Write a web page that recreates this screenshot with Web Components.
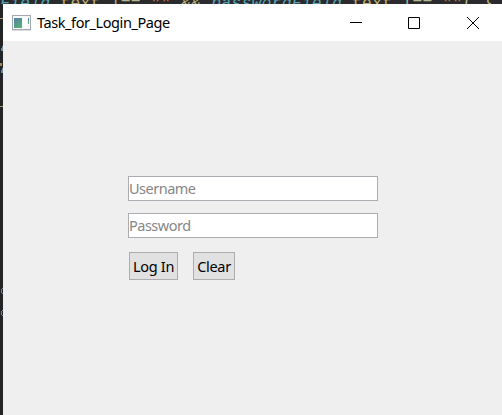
<!DOCTYPE html>
<html lang="en"><head><meta charset="utf-8"><title>Task_for_Login_Page</title>
<style>html,body{margin:0;height:100%;overflow:hidden;background:#232425}</style></head><body>
<desk-view></desk-view>
<script>
const define=(name,html)=>customElements.define(name,class extends HTMLElement{
  constructor(){super();this.attachShadow({mode:'open'}).innerHTML=html;}
});
define('code-strip',`<style>:host{display:block;height:4px;overflow:hidden;background:#2b2b2d;font:16.4px/20px "Liberation Mono",monospace;letter-spacing:.22px;color:#b5b78f}
div{white-space:pre;margin:-6px 0 0 0}.f{color:#58a3b5;font-style:italic}.y{color:#bfb178}.s{color:#c87d3e}</style><div><span class="f">Field</span>.<span class="y">text</span> !== <span class="s">""</span> <span class="y">&amp;&amp;</span> <span class="f">passwordField</span>.<span class="y">text</span> !== <span class="s">""</span>( }</div>`);
define('title-bar',`<style>:host{display:flex;align-items:center;height:37px;background:#fff;color:#000;font:14.5px/20px "Noto Sans",sans-serif}
.app{margin-left:9px;width:19px;height:16px;flex:none}.t{margin-left:6px;flex:1;white-space:nowrap;letter-spacing:-.42px;padding-bottom:2px}
.c{display:grid;grid-template-columns:58px 58px 60px;margin-right:-1px}.c svg{width:12px;height:12px;justify-self:center}</style>
<svg class="app" viewBox="0 0 19 16"><rect x=".5" y=".5" width="18" height="14" fill="#f7f8fa" stroke="#a5a8ae"/><path d="M0 15.5h19" stroke="#ddd"/><defs><linearGradient id="g" x2=".6" y2="1"><stop stop-color="#5580a8"/><stop offset="1" stop-color="#57ad79"/></linearGradient></defs><rect x="2" y="3" width="8" height="10" fill="url(#g)"/><rect x="11" y="3" width="4" height="10" fill="#fff"/><rect x="16" y="3" width="1" height="3" fill="#4a83b5"/><rect x="16" y="6" width="1" height="3" fill="#65b184"/></svg>
<span class="t"><slot></slot></span>
<div class="c"><svg viewBox="0 0 12 12"><path d="M0 5.5h12" stroke="#000"/></svg><svg viewBox="0 0 12 12"><path d="M.5.5h11v11H.5z" fill="none" stroke="#000"/></svg><svg viewBox="0 0 12 12"><path d="M0 0l12 12M12 0L0 12" stroke="#000"/></svg></div>`);
define('text-field',`<style>:host{display:flex;align-items:center;box-sizing:border-box;width:250px;height:25px;padding-bottom:2px;border:1px solid #abadb3;background:#fff;color:#868686;letter-spacing:-.5px;font:14.5px/20px "Noto Sans",sans-serif}</style><slot></slot>`);
define('push-button',`<style>:host{display:flex;align-items:center;justify-content:center;box-sizing:border-box;width:var(--w);height:28px;border:1px solid #adadad;background:#e1e1e1;color:#000;white-space:nowrap;letter-spacing:-.3px;font:14.5px/20px "Noto Sans",sans-serif}</style><slot></slot>`);
define('login-form',`<style>:host{display:flex;flex-direction:column;padding:135px 0 0 125px}text-field+text-field{margin-top:12px}.b{display:flex;gap:15px;margin:14px 0 0 1px}</style>
<text-field>Username</text-field><text-field>Password</text-field><div class="b"><push-button style="--w:49px">Log In</push-button><push-button style="--w:42px">Clear</push-button></div>`);
define('code-gutter',`<style>:host{display:block;width:3px;overflow:hidden;background:#232425}svg{display:block}</style>
<svg width="3" height="411"><path d="M0 14.500h3M0 102.500h3" stroke="#a09b72"/><path d="M2.500 42v5M1.500 44v3M2.500 64v5M1.500 66v3M1.500 285v4M2.500 284v1M2.500 289v1M1.500 307v4M2.500 306v1M2.500 311v1" stroke="#668ca3"/><path d="M0 59h2v3H0z" fill="#a0865a"/></svg>`);
define('desk-view',`<style>:host{display:block;height:415px}.r{display:flex}.w{flex:1;height:411px;background:#efefef;min-width:0}</style>
<code-strip></code-strip><div class="r"><code-gutter></code-gutter><div class="w"><title-bar>Task_for_Login_Page</title-bar><login-form></login-form></div></div>`);
</script></body></html>
